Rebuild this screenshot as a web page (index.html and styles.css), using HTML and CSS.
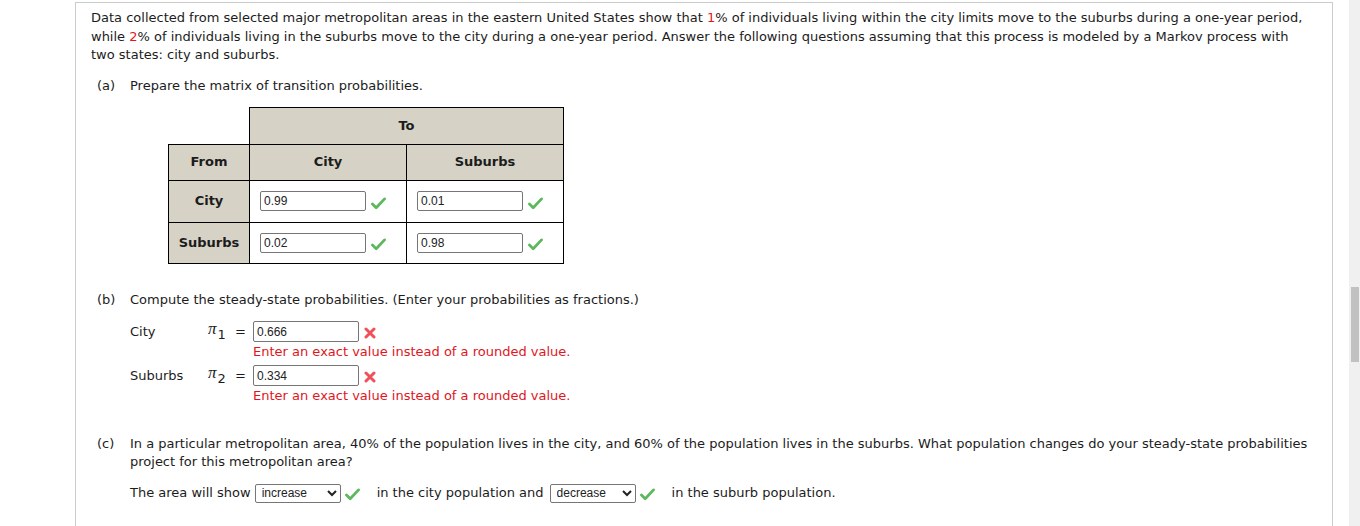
FILE: index.html
```html
<!DOCTYPE html>
<html lang="en">
<head>
  <meta charset="UTF-8" />
  <title>Markov Process - City and Suburbs</title>
  <link rel="stylesheet" href="styles.css">
</head>
<body>
  <div class="panel">
    <p class="intro">
      Data collected from selected major metropolitan areas in the eastern United States show that <span class="red">1</span>% of individuals living within the city limits move to the suburbs during a one-year period, while <span class="red">2</span>% of individuals living in the suburbs move to the city during a one-year period. Answer the following questions assuming that this process is modeled by a Markov process with two states: city and suburbs.
    </p>

    <div class="part">
      <span class="part-label">(a)</span>
      <div class="part-body">
        <p>Prepare the matrix of transition probabilities.</p>
        <table class="matrix">
          <tr class="row-to">
            <td class="blank"></td>
            <th colspan="2">To</th>
          </tr>
          <tr class="row-head">
            <th class="from">From</th>
            <th class="col">City</th>
            <th class="col">Suburbs</th>
          </tr>
          <tr class="row-city">
            <th class="from">City</th>
            <td class="col"><input type="text" value="0.99"><svg class="ok" viewBox="0 0 16 14"><path d="M1.5 7.5 L5.5 11.5 L14.5 2" /></svg></td>
            <td class="col"><input type="text" value="0.01"><svg class="ok" viewBox="0 0 16 14"><path d="M1.5 7.5 L5.5 11.5 L14.5 2" /></svg></td>
          </tr>
          <tr class="row-sub">
            <th class="from">Suburbs</th>
            <td class="col"><input type="text" value="0.02"><svg class="ok" viewBox="0 0 16 14"><path d="M1.5 7.5 L5.5 11.5 L14.5 2" /></svg></td>
            <td class="col"><input type="text" value="0.98"><svg class="ok" viewBox="0 0 16 14"><path d="M1.5 7.5 L5.5 11.5 L14.5 2" /></svg></td>
          </tr>
        </table>
      </div>
    </div>

    <div class="part part-b">
      <span class="part-label">(b)</span>
      <div class="part-body">
        <p>Compute the steady-state probabilities. (Enter your probabilities as fractions.)</p>
        <div class="steady">
          <span class="state">City</span>
          <span class="pi">&pi;<sub>1</sub></span>
          <span class="eq">=</span>
          <span class="answer"><input type="text" value="0.666"><svg class="bad" viewBox="0 0 12 12"><path d="M2 2 L10 10 M10 2 L2 10" /></svg></span>
          <span class="error">Enter an exact value instead of a rounded value.</span>

          <span class="state">Suburbs</span>
          <span class="pi">&pi;<sub>2</sub></span>
          <span class="eq">=</span>
          <span class="answer"><input type="text" value="0.334"><svg class="bad" viewBox="0 0 12 12"><path d="M2 2 L10 10 M10 2 L2 10" /></svg></span>
          <span class="error">Enter an exact value instead of a rounded value.</span>
        </div>
      </div>
    </div>

    <div class="part part-c">
      <span class="part-label">(c)</span>
      <div class="part-body">
        <p>In a particular metropolitan area, 40% of the population lives in the city, and 60% of the population lives in the suburbs. What population changes do your steady-state probabilities project for this metropolitan area?</p>
        <div class="sentence">
          The area will show
          <select><option>increase</option><option>decrease</option></select>
          <svg class="ok" viewBox="0 0 16 14"><path d="M1.5 7.5 L5.5 11.5 L14.5 2" /></svg>
          <span class="gap">in the city population and</span>
          <select><option>decrease</option><option>increase</option></select>
          <svg class="ok" viewBox="0 0 16 14"><path d="M1.5 7.5 L5.5 11.5 L14.5 2" /></svg>
          <span class="gap">in the suburb population.</span>
        </div>
      </div>
    </div>
  </div>

  <div class="scrollbar"><div class="thumb"></div></div>
</body>
</html>
```

FILE: styles.css
```css
body {
  margin: 0;
  background: #fff;
  font-family: "DejaVu Sans", Verdana, sans-serif;
  font-size: 13px;
  color: #1c1c1c;
  overflow: hidden;
}
p { margin: 0; }
.red { color: #e8141c; }

.panel {
  margin: 2px 0 0 75px;
  width: 1226px;
  height: 600px;
  padding: 6px 15px 0 15px;
  border: 1px solid #ccc;
  border-bottom: none;
}
.intro { width: 1216px; line-height: 18.5px; }

.part {
  display: flex;
  margin-top: 12px;
  padding-left: 6px;
  line-height: 18px;
}
.part-label { width: 33px; flex-shrink: 0; }
.part-body { flex: 1; }

/* (a) matrix */
.matrix {
  border-collapse: collapse;
  margin: 12px 0 0 38px;
  font-weight: bold;
}
.matrix th, .matrix td {
  border: 1px solid #000;
  text-align: center;
  padding: 0;
}
.matrix th { background: #d6d2c6; }
.matrix td.blank {
  border: none;
  border-right: 1px solid #000;
  border-bottom: 1px solid #000;
  background: none;
}
.matrix .from { width: 80px; }
.matrix .col { width: 156px; }
.matrix td.col { text-align: left; padding-left: 10px; width: 146px; background: #fff; }
.row-to th { height: 36px; }
.row-head th { height: 35px; }
.row-city th, .row-city td { height: 41px; }
.row-sub th, .row-sub td { height: 40px; }
.matrix td input { margin: 0 5px 0 0; vertical-align: middle; }
.matrix td .ok { vertical-align: middle; margin-top: 4px; }

input[type="text"] {
  width: 98px;
  height: 16px;
  padding: 1px 3px;
  font-family: "Liberation Sans", Arial, sans-serif;
  font-size: 12px;
  color: #222;
  border: 1px solid #767676;
  border-radius: 2px;
}

.ok {
  width: 15px;
  height: 13px;
  fill: none;
  stroke: #5cb85c;
  stroke-width: 3;
  stroke-linecap: round;
  stroke-linejoin: round;
}
.bad {
  width: 12px;
  height: 12px;
  fill: none;
  stroke: #f0505a;
  stroke-width: 3;
  stroke-linecap: round;
  margin-left: 5px;
  margin-top: 3px;
  vertical-align: middle;
}

/* (b) steady state */
.part-b { margin-top: 27px; }
.steady {
  display: grid;
  grid-template-columns: 78px 27px 18px auto;
  align-items: center;
  margin-top: 11px;
}
.steady .answer { display: flex; align-items: center; height: 21px; }
.steady .answer input { height: 17px; }
.pi {
  font-family: "Liberation Serif", "Times New Roman", serif;
  font-style: italic;
  font-size: 17px;
  color: #1c1c1c;
}
.pi sub {
  font-family: "DejaVu Sans", sans-serif;
  font-style: normal;
  font-size: 13px;
  vertical-align: -5px;
  margin-left: 1px;
}
.error {
  grid-column: 4;
  color: #e0161e;
  line-height: 16px;
  margin-bottom: 4px;
}

/* (c) */
.part-c { margin-top: 27px; }
.sentence {
  margin-top: 13px;
  display: flex;
  align-items: center;
}
.sentence select {
  width: 86px;
  height: 19px;
  margin: 0 4px;
  padding: 0 2px;
  font-family: "Liberation Sans", Arial, sans-serif;
  font-size: 12px;
  color: #222;
  border: 1px solid #767676;
  border-radius: 2px;
  background: #fff;
}
.sentence .ok { margin-top: 2px; }
.sentence .gap { margin: 0 2px 0 17px; }

.scrollbar {
  position: fixed;
  top: 0;
  right: 0;
  width: 11px;
  height: 100%;
  background: #f0f0f0;
}
.scrollbar .thumb {
  margin: 287px 0 0 2px;
  width: 8px;
  height: 75px;
  background: #c1c1c1;
}
```
